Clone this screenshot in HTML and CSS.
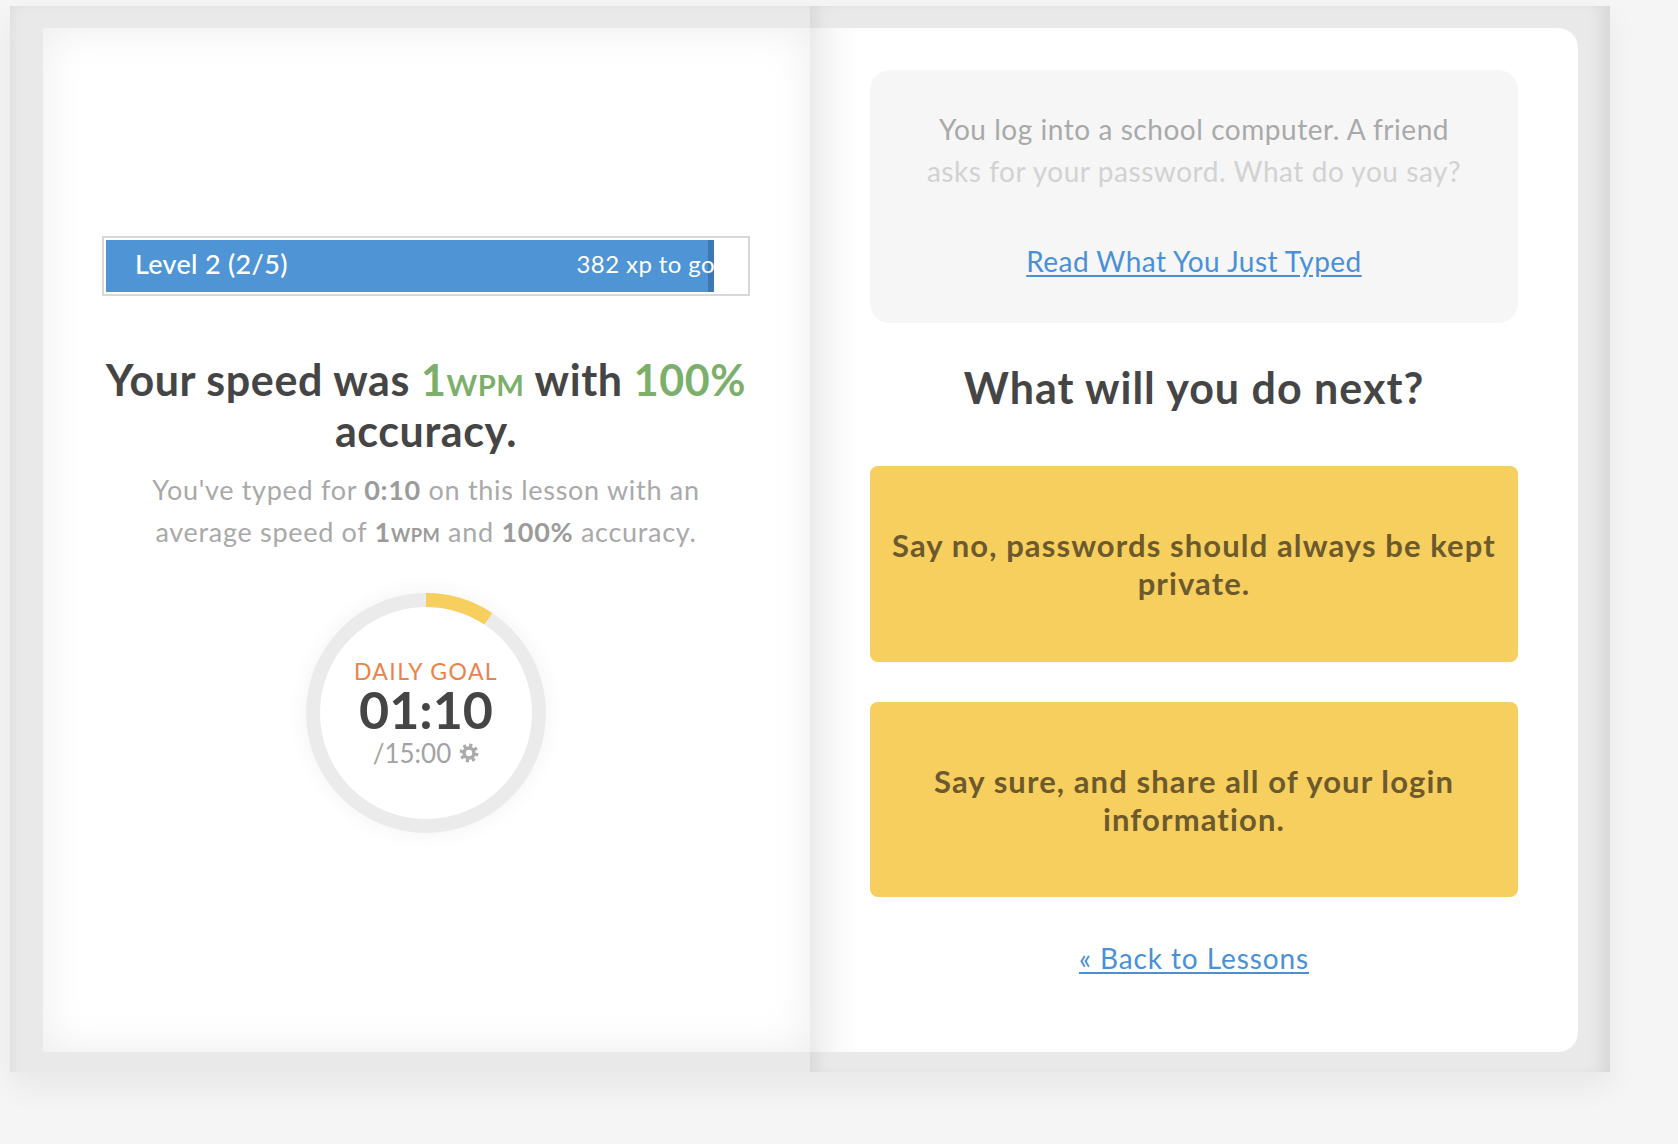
FILE: index.html
```html
<!DOCTYPE html>
<html lang="en">
<head>
<meta charset="utf-8">
<title>Lesson complete</title>
<link rel="stylesheet" href="styles.css">
</head>
<body>
<div class="book">
  <div class="cover cover-left">
    <section class="page page-left">
      <div class="level">
        <div class="level-fill" style="width:95%">
          <span class="level-name">Level 2 (2/5)</span>
          <span class="level-xp">382 xp to go</span>
        </div>
      </div>
      <h1 class="result">Your speed was <span class="good">1<span class="unit">WPM</span></span> with <span class="good">100%</span> accuracy.</h1>
      <p class="summary">You've typed for <b>0:10</b> on this lesson with an average speed of <b>1<span class="unit">WPM</span></b> and <b>100%</b> accuracy.</p>
      <div class="goal">
        <svg class="goal-ring" width="240" height="240" viewBox="0 0 240 240">
          <circle cx="120" cy="120" r="113" fill="none" stroke="#ebebeb" stroke-width="14"/>
          <circle cx="120" cy="120" r="113" fill="none" stroke="#f7cf5f" stroke-width="14" stroke-dasharray="66 720" transform="rotate(-90 120 120)"/>
        </svg>
        <div class="goal-label">DAILY GOAL</div>
        <div class="goal-time">01:10</div>
        <div class="goal-total">/15:00 <svg class="gear" width="20" height="20" viewBox="0 0 20 20"><circle cx="10" cy="10" r="7.6" fill="none" stroke="#aaa" stroke-width="3.6" stroke-dasharray="2.98 2.98"/><circle cx="10" cy="10" r="5" fill="none" stroke="#aaa" stroke-width="3.6"/></svg></div>
      </div>
    </section>
  </div>
  <div class="cover cover-right">
    <section class="page page-right">
      <div class="prompt">
        <p class="prompt-text"><span class="line-done">You log into a school computer. A friend</span><span class="line-fade">asks for your password. What do you say?</span></p>
        <a class="link" href="#">Read What You Just Typed</a>
      </div>
      <h2 class="next">What will you do next?</h2>
      <button class="choice">Say no, passwords should always be kept private.</button>
      <button class="choice">Say sure, and share all of your login information.</button>
      <a class="link back" href="#">« Back to Lessons</a>
    </section>
  </div>
</div>
</body>
</html>
```
FILE: styles.css
```css
html, body {
  margin: 0;
  padding: 0;
}
body {
  background: #f5f5f5;
  font-family: Lato, "Open Sans", sans-serif;
  width: 1678px;
  height: 1144px;
  overflow: hidden;
}
.book {
  display: flex;
  margin: 6px 0 0 10px;
  width: 1600px;
  height: 1066px;
  box-shadow: 0 14px 30px rgba(0, 0, 0, 0.06);
}
.cover {
  width: 800px;
  box-sizing: border-box;
  background: #e9e9e9;
}
.cover-left {
  padding: 22px 0 20px 33px;
  box-shadow: inset 12px 0 14px -10px rgba(0, 0, 0, 0.05), inset 0 10px 14px -10px rgba(0,0,0,0.03);
}
.cover-right {
  padding: 22px 32px 20px 0;
  box-shadow: inset 16px 0 18px -12px rgba(0, 0, 0, 0.09), inset -16px 0 18px -10px rgba(0, 0, 0, 0.09);
}
.page {
  height: 100%;
  box-sizing: border-box;
  display: flex;
  flex-direction: column;
  align-items: center;
}
.page-left {
  background: #fff;
  box-shadow: inset 0 0 44px rgba(0, 0, 0, 0.075);
  padding: 208px 60px 0 59px;
}
.page-right {
  background: linear-gradient(to right, rgba(0,0,0,0.08), rgba(0,0,0,0.02) 28px, rgba(0,0,0,0) 50px), #fff;
  border-radius: 0 20px 20px 0;
  padding: 42px 60px 0 60px;
}

/* level bar */
.level {
  width: 100%;
  height: 60px;
  box-sizing: border-box;
  border: 2px solid #d8d8d8;
  padding: 2px;
  background: #fff;
}
.level-fill {
  height: 52px;
  background: #4f95d6;
  box-shadow: inset -6px 0 0 #3c78b1;
  display: flex;
  align-items: center;
  justify-content: space-between;
  padding: 0 0 5px 29px;
  box-sizing: border-box;
  overflow: hidden;
  white-space: nowrap;
  color: #fff;
}
.level-name {
  font-size: 27px;
  letter-spacing: 0.3px;
  font-weight: 500;
}
.level-xp {
  font-size: 24px;
  letter-spacing: 0.4px;
  margin-right: -1px;
}

/* results */
.result {
  margin: 58px 0 0;
  font-size: 43px;
  letter-spacing: 0.6px;
  line-height: 51px;
  font-weight: 700;
  color: #454545;
  text-align: center;
}
.good {
  color: #7daf6c;
}
.unit {
  font-size: 0.68em;
  letter-spacing: 0.5px;
  line-height: 1;
}
.summary {
  margin: 13px 0 0;
  font-size: 27px;
  letter-spacing: 0.7px;
  line-height: 42px;
  color: #a9a9a9;
  text-align: center;
  padding: 0 14px;
}
.summary b {
  color: #9b9b9b;
}

/* daily goal */
.goal {
  position: relative;
  margin-top: 40px;
  width: 240px;
  height: 240px;
  border-radius: 50%;
  box-shadow: 0 0 22px rgba(0, 0, 0, 0.05);
  display: flex;
  flex-direction: column;
  align-items: center;
  padding-top: 65px;
  box-sizing: border-box;
}
.goal-ring {
  position: absolute;
  left: 0;
  top: 0;
}
.goal-label {
  position: relative;
  font-size: 23px;
  line-height: 26px;
  letter-spacing: 1.4px;
  color: #e9834b;
}
.goal-time {
  position: relative;
  font-size: 52px;
  line-height: 48px;
  font-weight: 700;
  color: #454545;
  margin-top: 1px;
}
.goal-total {
  position: relative;
  font-size: 26px;
  line-height: 30px;
  color: #a3a3a3;
  display: flex;
  align-items: center;
  gap: 8px;
  margin-top: 5px;
}

/* right page */
.prompt {
  width: 100%;
  height: 253px;
  box-sizing: border-box;
  background: #f6f6f6;
  border-radius: 20px;
  padding: 38px 10px 0;
  text-align: center;
}
.prompt-text {
  margin: 0;
  font-size: 28px;
  letter-spacing: 0.55px;
  line-height: 42px;
}
.prompt-text span {
  display: block;
}
.line-done {
  color: #a9a9a9;
}
.line-fade {
  color: #d2d2d2;
}
.link {
  color: #4a90d9;
  text-decoration: underline;
  text-underline-offset: 3px;
  font-size: 28px;
  letter-spacing: 0.45px;
  line-height: 42px;
}
.prompt .link {
  display: inline-block;
  margin-top: 48px;
}
.next {
  margin: 39px 0 0;
  font-size: 43px;
  letter-spacing: 1px;
  line-height: 51px;
  font-weight: 700;
  color: #454545;
}
.choice {
  width: 100%;
  height: 196px;
  margin-top: 53px;
  border: none;
  border-radius: 8px;
  background: #f7cf5f;
  color: #6c5a2d;
  font-family: Lato, "Open Sans", sans-serif;
  font-size: 31px;
  letter-spacing: 1.1px;
  line-height: 38px;
  font-weight: 700;
  padding: 0 20px;
  text-align: center;
}
.choice + .choice {
  margin-top: 40px;
  height: 195px;
}
.back {
  margin-top: 40px;
  font-size: 28px;
  letter-spacing: 0.9px;
}
```
